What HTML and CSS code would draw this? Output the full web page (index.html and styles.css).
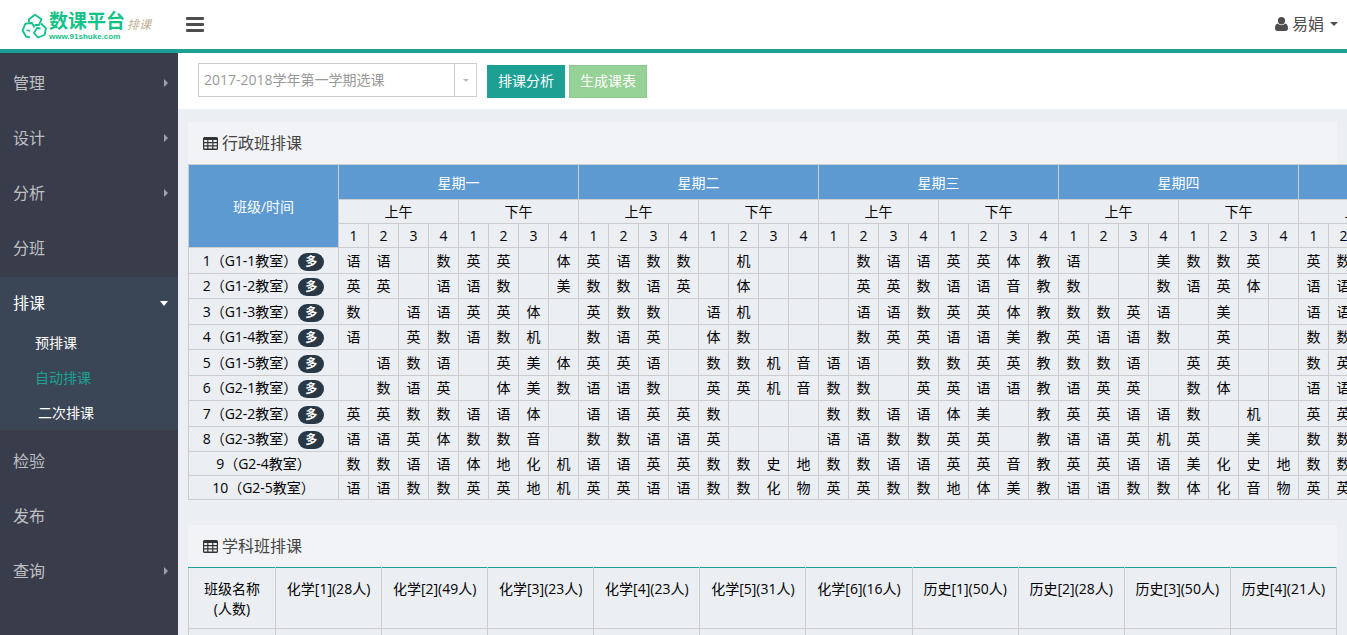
FILE: index.html
```html
<!DOCTYPE html>
<html lang="zh-CN">
<head>
<meta charset="utf-8">
<title>数课平台 排课</title>
<link rel="stylesheet" href="styles.css">
</head>
<body>
<svg class="defs" aria-hidden="true">
  <symbol id="icon-table" viewBox="0 0 15 13">
    <path fill-rule="evenodd" d="M1.500 0h12A1.500 1.500 0 0 1 15 1.500v10a1.500 1.500 0 0 1-1.500 1.500h-12A1.500 1.500 0 0 1 0 11.500v-10A1.500 1.500 0 0 1 1.500 0zM1.200 3v2h3v-2zM5.400 3v2h3.800v-2zM10.400 3v2h3.400v-2zM1.200 6.200v2h3v-2zM5.400 6.200v2h3.800v-2zM10.400 6.200v2h3.400v-2zM1.200 9.400v2.200h3v-2.200zM5.400 9.400v2.200h3.800v-2.200zM10.400 9.400v2.200h3.400v-2.200z"/>
  </symbol>
</svg>
<header class="topbar">
  <a class="logo" href="#">
    <svg class="logo-mark" viewBox="0 0 26 26" fill="none" stroke="#12c287" stroke-width="1.800" stroke-linejoin="round" aria-hidden="true">
      <path d="M8 9.500L7.800 6.500 14 1.700l6.500 4.600L18 12h-4.500"/>
      <path d="M13.500 14.500L11 10l-6.500.7-3 6.800L5 23.500l4 .8M5.500 17l3.500 1"/>
      <path d="M20 10.500l5 5-1.500 6.500-6.500 2.500-4-4.500 3-5 3.500.5"/>
    </svg>
    <span class="logo-text"><strong class="logo-name">数课平台</strong><small class="logo-url">www.91shuke.com</small></span>
    <em class="logo-sub">排课</em>
  </a>
  <button class="menu-toggle" type="button" aria-label="菜单"><span></span><span></span><span></span></button>
  <button class="user" type="button">
    <svg class="user-icon" viewBox="0 0 13 14" aria-hidden="true"><path d="M6.500 0a3.600 3.600 0 0 1 3.600 3.700c0 2-1.600 3.800-3.600 3.800S2.900 5.700 2.900 3.700A3.600 3.600 0 0 1 6.500 0zM2.900 6.600c1 1 2.200 1.700 3.600 1.700s2.600-.7 3.600-1.700c2 .4 2.900 2.200 2.900 4.600 0 1.700-1 2.800-2.500 2.800h-8C1 14 0 12.900 0 11.200 0 8.800.9 7 2.900 6.600z"/></svg>
    <span>易娟</span><i class="caret"></i>
  </button>
</header>
<div class="body">
  <nav class="sidebar">
    <ul class="menu">
      <li><a href="#">管理<i class="arrow"></i></a></li>
      <li><a href="#">设计<i class="arrow"></i></a></li>
      <li><a href="#">分析<i class="arrow"></i></a></li>
      <li><a href="#">分班</a></li>
      <li class="open"><a href="#">排课<i class="arrow"></i></a>
        <ul class="submenu">
          <li><a href="#">预排课</a></li>
          <li><a class="current" href="#">自动排课</a></li>
          <li class="indent"><a href="#">二次排课</a></li>
        </ul>
      </li>
      <li><a href="#">检验</a></li>
      <li><a href="#">发布</a></li>
      <li><a href="#">查询<i class="arrow"></i></a></li>
    </ul>
  </nav>
  <main class="main">
    <div class="toolbar">
      <label class="picker">
        <select aria-label="学期选课"><option>2017-2018学年第一学期选课</option></select>
        <span class="picker-arrow"></span>
      </label>
      <button class="btn" type="button">排课分析</button>
      <button class="btn btn-light" type="button">生成课表</button>
    </div>
    <section class="panel">
      <h2 class="panel-title"><svg aria-hidden="true"><use href="#icon-table"/></svg>行政班排课</h2>
      <table class="schedule" id="schedule"></table>
    </section>
    <section class="panel">
      <h2 class="panel-title"><svg aria-hidden="true"><use href="#icon-table"/></svg>学科班排课</h2>
      <table class="subjects">
        <thead><tr>
          <th class="name">班级名称(人数)</th>
          <th>化学[1](28人)</th><th>化学[2](49人)</th><th>化学[3](23人)</th><th>化学[4](23人)</th><th>化学[5](31人)</th><th>化学[6](16人)</th>
          <th>历史[1](50人)</th><th>历史[2](28人)</th><th>历史[3](50人)</th><th>历史[4](21人)</th>
        </tr></thead>
        <tbody><tr><td></td><td></td><td></td><td></td><td></td><td></td><td></td><td></td><td></td><td></td><td></td></tr></tbody>
      </table>
    </section>
  </main>
</div>
<script src="schedule.js"></script>
</body>
</html>
```
FILE: styles.css
```css
* { box-sizing: border-box; }
body {
  margin: 0;
  height: 100vh;
  display: flex;
  flex-direction: column;
  overflow: hidden;
  background: #ebeef3;
  color: #000;
  font: 14px/20px "Open Sans", "Noto Sans CJK SC", sans-serif;
}
ul { margin: 0; padding: 0; list-style: none; }
a { color: inherit; text-decoration: none; }
button { font: inherit; cursor: pointer; }
.defs { display: none; }

.topbar {
  flex: none;
  display: flex;
  align-items: center;
  height: 53px;
  padding: 0 9px 0 21px;
  background: #fff;
  border-bottom: 4px solid #1ca094;
}
.logo { display: flex; align-items: center; width: 165px; color: #12c287; }
.logo-mark { width: 26px; height: 26px; margin: 3px 2px 0 0; }
.logo-text { display: flex; flex-direction: column; padding-top: 2px; }
.logo-name { font-size: 19px; line-height: 22px; font-weight: 700; }
.logo-url { font: bold 8px/10px "Liberation Sans", sans-serif; }
.logo-sub { margin-left: 2px; font-size: 12px; color: #bfb194; }
.menu-toggle {
  display: flex;
  flex-direction: column;
  gap: 3px;
  width: 18px;
  padding: 0;
  border: 0;
  background: none;
}
.menu-toggle span { height: 3px; border-radius: 1px; background: #4d4d4d; }
.user {
  display: flex;
  align-items: center;
  gap: 4px;
  margin-left: auto;
  padding: 0 0 2px;
  border: 0;
  background: none;
  color: #4d4d4d;
  font-size: 16px;
}
.user-icon { width: 13px; height: 14px; fill: #4d4d4d; }
.caret { margin-left: 2px; border: 4px solid transparent; border-top-color: #4d4d4d; border-bottom: 0; }

.body { flex: 1; display: flex; min-height: 0; }
.sidebar { flex: none; width: 178px; padding-top: 4px; background: #393c4a; color: #bfc0c4; }
.menu > li { margin-bottom: 7px; }
.menu > li > a {
  display: flex;
  align-items: center;
  justify-content: space-between;
  padding: 14px 10px 10px 13px;
  font-size: 16px;
  line-height: 24px;
}
.arrow { border: 4px solid transparent; border-left-color: #a0a2a9; border-right: 0; }
.menu > .open { margin-bottom: 5px; background: #3a4555; color: #fff; }
.open .arrow { border: 4px solid transparent; border-top: 5px solid #fff; border-bottom: 0; }
.submenu li { padding-left: 35px; line-height: 35px; }
.submenu .indent { padding-left: 38px; }
.submenu .current { color: #1ca094; }

.main { flex: 1; min-width: 0; overflow: hidden; }
.toolbar {
  display: flex;
  align-items: center;
  gap: 4px;
  height: 56px;
  padding: 0 20px;
  background: #fff;
}
.picker { display: flex; width: 279px; height: 34px; margin: 0 6px 2px 0; border: 1px solid #ccc; }
.picker select {
  flex: 1;
  appearance: none;
  padding: 0 5px;
  border: 0;
  background: #fff;
  color: #999;
  font: inherit;
}
.picker-arrow { display: grid; place-items: center; width: 22px; border-left: 1px solid #ccc; }
.picker-arrow::before { content: ""; border: 3px solid transparent; border-top-color: #bbb; border-bottom: 0; }
.btn { height: 33px; padding: 0 10px; border: 1px solid #1ca094; background: #1ca094; color: #fff; }
.btn-light { border-color: #8bca8f; background: #96d196; }

.panel { margin: 13px 10px 25px; }
.panel-title {
  display: flex;
  align-items: center;
  gap: 4px;
  height: 42px;
  margin: 0;
  padding: 0 15px;
  background: #f1f3f7;
  color: #444;
  font-size: 16px;
  font-weight: 400;
}
.panel-title svg { width: 15px; height: 13px; fill: #333; }
table { border-collapse: collapse; table-layout: fixed; }
th, td { padding: 0; border: 1px solid #ccc; font-weight: 400; text-align: center; }

.schedule { width: 1351px; }
.schedule col { width: 30px; }
.schedule .col-name { width: 150px; }
.schedule .day, .schedule .corner { padding-top: 2px; background: #5c9ad1; color: #fff; }
.schedule thead th { height: 24px; }
.schedule thead .day { height: 35px; }
.schedule tbody tr { height: 24px; }
.schedule tbody .multi:nth-child(odd) { height: 26px; }
.schedule tbody .multi:nth-child(even) { height: 25px; }
.room { display: flex; align-items: center; justify-content: center; gap: 1px; }
.badge {
  width: 26px;
  margin-top: 2px;
  border-radius: 9px;
  background: #293846;
  color: #fff;
  font-size: 12px;
  font-weight: 700;
  line-height: 18px;
}

.subjects { width: 100%; }
.subjects th { height: 61px; padding: 11px 8px 9px; border-top-color: #1ca094; vertical-align: top; }
.subjects .name { width: 87px; }
.subjects td { height: 40px; }
```
FILE: schedule.js
```js
// One string per day, one character per lesson; "." is a free lesson.
const rooms = [
  ["1（G1-1教室）", true, "语语.数英英.体", "英语数数.机..", ".数语语英英体教", "语..美数数英.", "英数......"],
  ["2（G1-2教室）", true, "英英.语语数.美", "数数语英.体..", ".英英数语语音教", "数..数语英体.", "语语......"],
  ["3（G1-3教室）", true, "数.语语英英体.", "英数数.语机..", ".语语数英英体教", "数数英语.美..", "语语......"],
  ["4（G1-4教室）", true, "语.英数语数机.", "数语英.体数..", ".数英英语语美教", "英语语数.英..", "数数......"],
  ["5（G1-5教室）", true, ".语数语.英美体", "英英语.数数机音", "语语.数数英英教", "数数语.英英..", "数英......"],
  ["6（G2-1教室）", true, ".数语英.体美数", "语语数.英英机音", "数数.英英语语教", "语英英.数体..", "语语......"],
  ["7（G2-2教室）", true, "英英数数语语体.", "语语英英数...", "数数语语体美.教", "英英语语数.机.", "英英......"],
  ["8（G2-3教室）", true, "语语英体数数音.", "数数语语英...", "语语数数英英.教", "语语英机英.美.", "数数......"],
  ["9（G2-4教室）", false, "数数语语体地化机", "语语英英数数史地", "数数语语英英音教", "英英语语美化史地", "数数......"],
  ["10（G2-5教室）", false, "语语数数英英地机", "英英语语数数化物", "英英数数地体美教", "语语数数体化音物", "英英......"]
];
const days = ["星期一", "星期二", "星期三", "星期四", "星期五"];
const each = (fn) => days.map(fn).join("");

const head =
  '<tr><th class="corner" rowspan="3">班级/时间</th>' + each((d) => `<th class="day" colspan="8">${d}</th>`) + "</tr>" +
  "<tr>" + each(() => '<th colspan="4">上午</th><th colspan="4">下午</th>') + "</tr>" +
  "<tr>" + each(() => [1, 2, 3, 4, 1, 2, 3, 4].map((n) => `<th>${n}</th>`).join("")) + "</tr>";

const body = rooms.map(([name, multi, ...lessons]) => {
  const badge = multi ? '<span class="badge">多</span>' : "";
  const cells = [...lessons.join("")].map((c) => `<td>${c === "." ? "" : c}</td>`).join("");
  return `<tr class="${multi ? "multi" : "single"}"><th><div class="room"><span>${name}</span>${badge}</div></th>${cells}</tr>`;
}).join("");

document.getElementById("schedule").innerHTML =
  '<colgroup><col class="col-name">' + "<col>".repeat(40) + "</colgroup>" +
  `<thead>${head}</thead><tbody>${body}</tbody>`;
```
